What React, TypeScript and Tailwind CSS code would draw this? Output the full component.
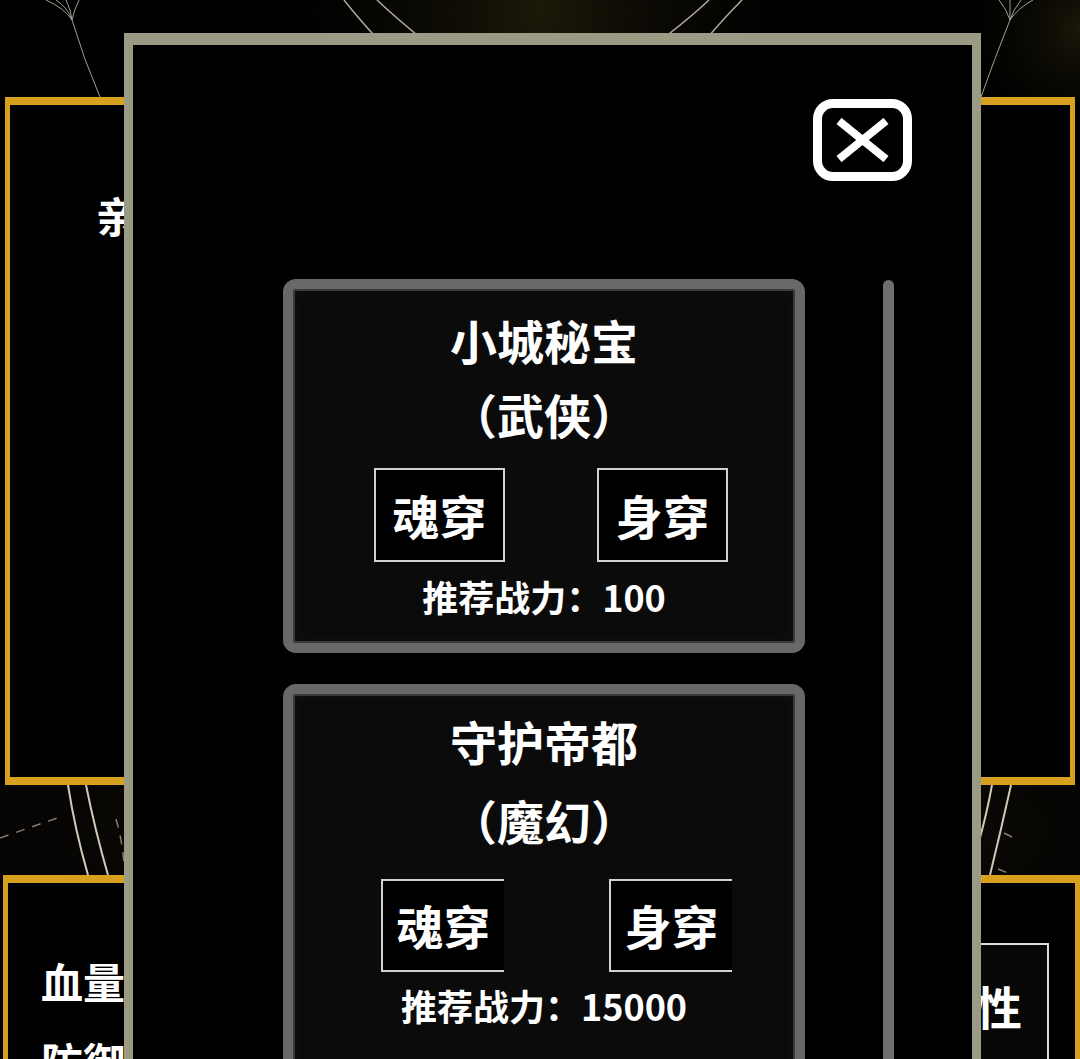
import React from "react";

type StageProps = {
  title: string;
  genre: string;
  power: string;
  boxCls: string;
  lineCls: string;
  rowCls: string;
  btnCls: string;
  powerCls: string;
};

function StageCard({ title, genre, power, boxCls, lineCls, rowCls, btnCls, powerCls }: StageProps) {
  return (
    <div className={boxCls}>
      <div className={lineCls}>{title}</div>
      <div className={lineCls}>（{genre}）</div>
      <div className={rowCls}>
        <button className={btnCls}>魂穿</button>
        <button className={btnCls}>身穿</button>
      </div>
      <div className={powerCls}>推荐战力：{power}</div>
    </div>
  );
}

function TopOrnament() {
  return (
    <svg width="1080" height="97" viewBox="0 0 1080 97" className="block shrink-0">
      <defs>
        <radialGradient id="topGlow" cx="540" cy="10" r="300" gradientUnits="userSpaceOnUse">
          <stop offset="0" stopColor="#3a3112" stopOpacity="0.5" />
          <stop offset="1" stopColor="#000" stopOpacity="0" />
        </radialGradient>
        <radialGradient id="cornerGlow" cx="1080" cy="30" r="130" gradientUnits="userSpaceOnUse">
          <stop offset="0" stopColor="#433a16" stopOpacity="0.4" />
          <stop offset="1" stopColor="#000" stopOpacity="0" />
        </radialGradient>
      </defs>
      <rect width="1080" height="97" fill="url(#topGlow)" />
      <rect width="1080" height="97" fill="url(#cornerGlow)" />
      <g fill="none" stroke="#c9c7b4" strokeWidth="1" opacity="0.8">
        <path d="M46 0 Q64 8 72 20" />
        <path d="M56 0 Q68 8 72 20" />
        <path d="M66 0 Q71 10 72 20" />
        <path d="M79 0 Q74 10 72 20" />
        <path d="M72 20 Q84 60 100 97" />
        <path d="M999 0 Q1007 10 1010 20" />
        <path d="M1010 0 Q1010 10 1010 20" />
        <path d="M1021 0 Q1013 10 1010 20" />
        <path d="M1033 0 Q1018 8 1010 20" />
        <path d="M1010 20 Q994 60 981 97" />
      </g>
      <g fill="none" stroke="#bfbdaa" strokeWidth="1.5" opacity="0.9">
        <path d="M344 0 Q358 18 382 44" />
        <path d="M377 0 Q396 18 428 44" />
        <path d="M709 0 Q690 18 656 44" />
        <path d="M742 0 Q724 18 702 44" />
      </g>
    </svg>
  );
}

function MidOrnament() {
  return (
    <svg width="1080" height="90" viewBox="0 0 1080 90" className="block shrink-0">
      <defs>
        <radialGradient id="midGlow" cx="560" cy="45" r="620" gradientUnits="userSpaceOnUse" gradientTransform="matrix(1 0 0 0.25 0 33.75)">
          <stop offset="0" stopColor="#5a4b1a" stopOpacity="0.7" />
          <stop offset="1" stopColor="#000" stopOpacity="0" />
        </radialGradient>
      </defs>
      <rect width="1080" height="90" fill="#050403" />
      <rect width="1080" height="90" fill="url(#midGlow)" />
      <g fill="none" stroke="#e4e0cc" strokeWidth="2" opacity="0.9">
        <path d="M68 0 Q75 45 88 90" />
        <path d="M86 0 Q95 45 108 90" />
        <path d="M992 0 Q987 28 978 60" />
        <path d="M1011 0 Q1001 45 990 90" />
      </g>
      <g fill="none" stroke="#d8d2b8" strokeWidth="1.5" strokeDasharray="9 8" opacity="0.6">
        <path d="M0 53 L60 32" />
        <path d="M116 34 Q122 55 124 78" />
        <path d="M1004 48 L1012 52" />
        <path d="M998 84 L1008 88" />
      </g>
    </svg>
  );
}

export default function App() {
  return (
    <div className="relative h-[1059px] w-[1080px] overflow-hidden bg-black font-['Noto_Sans_CJK_SC','Noto_Sans_CJK_JP',sans-serif] text-white">
      {/* page underneath the dialog */}
      <div className="flex flex-col">
        <TopOrnament />
        <section className="mx-[5px] h-[688px] shrink-0 border-x-[5px] border-y-[8px] border-[#d8a01f] bg-black pl-[86px] pt-[78px]">
          <p className="text-[42px] font-bold leading-[63px]">亲爱的玩家</p>
        </section>
        <MidOrnament />
        <section className="ml-[3px] flex h-[260px] shrink-0 justify-between border-x-[5px] border-t-[8px] border-[#d8a01f] bg-black pt-[58px]">
          <div className="pl-[33px] text-[42px] font-bold leading-[80px]">
            <p>血量</p>
            <p>防御</p>
          </div>
          <div className="mr-[26px] mt-[2px] flex h-[124px] w-[130px] items-center justify-end border-2 border-[#dcdcdc] bg-[#070707] pr-[25px] text-[46px] font-bold">
            属性
          </div>
        </section>
      </div>

      {/* dialog */}
      <div className="absolute left-[124px] top-[33px] h-[1060px] w-[857px] border-x-[9px] border-t-[12px] border-[#9b9b85] bg-black">
        <div className="flex justify-end pr-[60px] pt-[54px]">
          <button className="flex h-[82px] w-[99px] items-center justify-center rounded-[20px] border-[9px] border-white bg-black">
            <svg width="55" height="44" viewBox="0 0 55 44">
              <path d="M4 3 L51 41 M51 3 L4 41" stroke="#fff" strokeWidth="8" fill="none" />
            </svg>
          </button>
        </div>

        <div className="mt-[98px] flex">
          <div className="ml-[150px] flex w-[522px] flex-col gap-[31px]">
            <StageCard
              title="小城秘宝"
              genre="武侠"
              power="100"
              boxCls="flex flex-col rounded-[13px] border-[10px] border-[#686868] bg-[#0b0b0b] pb-[25px] pt-[14px] shadow-[inset_0_0_0_2px_#3a3a3a,inset_0_0_12px_#151515]"
              lineCls="text-center text-[47px] font-bold leading-[74px]"
              rowCls="mt-[17px] flex gap-[92px] pl-[81px]"
              btnCls="flex h-[94px] w-[131px] items-center justify-center border-2 border-[#d2d2d2] bg-black text-[47px] font-bold"
              powerCls="mt-[12px] text-center text-[36px] font-bold leading-[44px]"
            />
            <StageCard
              title="守护帝都"
              genre="魔幻"
              power="15000"
              boxCls="flex h-[420px] flex-col rounded-[13px] border-[10px] border-[#686868] bg-[#0b0b0b] pt-[7px] shadow-[inset_0_0_0_2px_#3a3a3a,inset_0_0_12px_#151515]"
              lineCls="text-center text-[47px] font-bold leading-[79px]"
              rowCls="mt-[20px] flex gap-[105px] pl-[88px]"
              btnCls="flex h-[93px] w-[123px] items-center justify-center border-y-2 border-l-2 border-r-0 border-[#d2d2d2] bg-black text-[47px] font-bold"
              powerCls="mt-[11px] text-center text-[36px] font-bold leading-[44px]"
            />
          </div>
          <div className="ml-[78px] mt-[1px] h-[900px] w-[11px] rounded-t-full bg-[#6f6f6f]" />
        </div>
      </div>
    </div>
  );
}
